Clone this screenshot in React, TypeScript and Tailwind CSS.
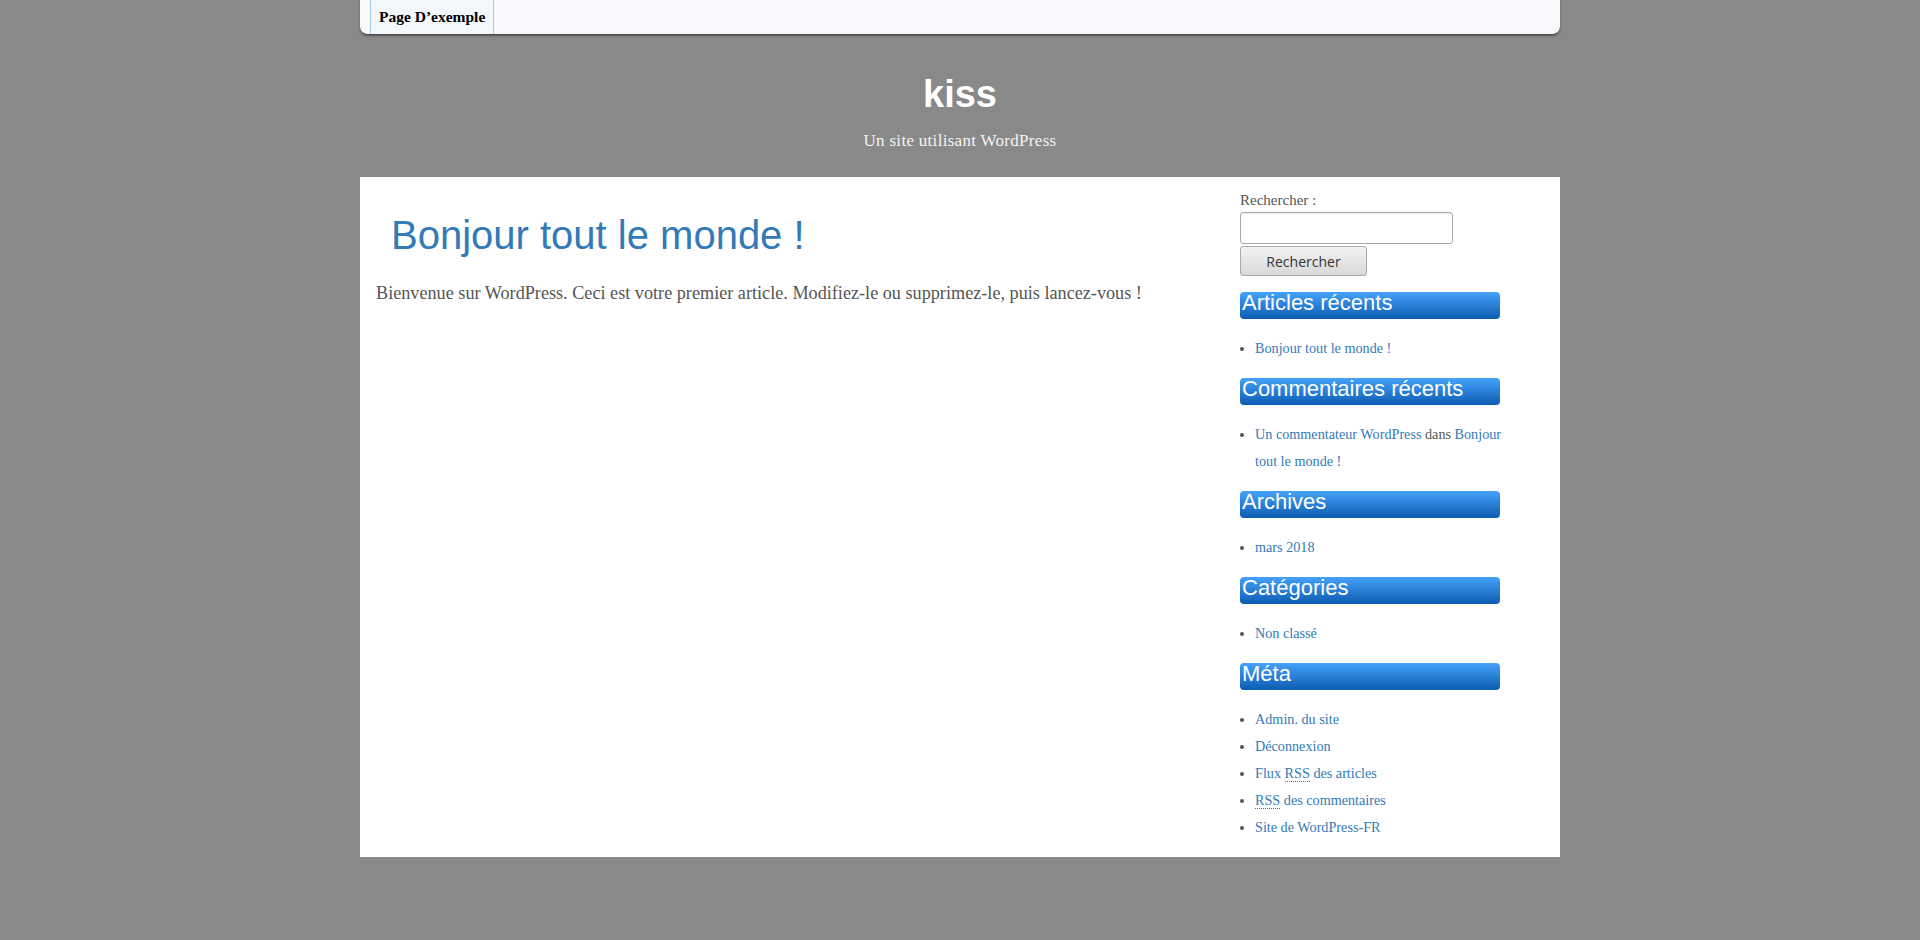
import React from "react";

const serif = "font-['Liberation_Serif','Times_New_Roman',serif]";
const sans = "font-['Liberation_Sans',Arial,sans-serif]";

const WidgetTitle: React.FC<{ children: React.ReactNode }> = ({ children }) => (
  <h2
    className={`${sans} h-[27px] rounded-[4px] bg-gradient-to-b from-[#45a2fa] to-[#0a5db3] pl-[2px] text-[22px] leading-[22px] text-white`}
  >
    {children}
  </h2>
);

const Link: React.FC<{ children: React.ReactNode }> = ({ children }) => (
  <a href="#" className="text-[#337ab7]">
    {children}
  </a>
);

const Rss = () => (
  <abbr className="no-underline border-b border-dotted border-[#337ab7]" title="Really Simple Syndication">
    RSS
  </abbr>
);

const WidgetList: React.FC<{ children: React.ReactNode }> = ({ children }) => (
  <ul className={`${serif} my-4 -mr-[8px] list-disc pl-[15px] text-[14.2px] leading-[27px] text-[#555] marker:text-[#555]`}>
    {children}
  </ul>
);

export default function App() {
  return (
    <div className="min-h-screen bg-[#898989]">
      <div className="mx-auto w-[1200px]">
        {/* menu */}
        <nav className="flex h-[35px] rounded-b-[8px] border-b border-[#4a4a4a] bg-[#f8f9fd] pl-[10px] shadow-[0_1px_2px_rgba(0,0,0,0.35)]">
          <a
            href="#"
            className={`${serif} h-full border-x border-[#a9c7e0] bg-[#f4f7fc] px-[8px] text-[15.5px] font-bold leading-[34px] text-black`}
          >
            Page D’exemple
          </a>
        </nav>

        {/* site title */}
        <header className="pt-[37px] pb-[24px] text-center">
          <h1 className={`${sans} text-[38px] font-bold leading-[44px] text-white`}>kiss</h1>
          <p className={`${serif} mt-[13px] text-[17px] leading-[24px] tracking-[0.3px] text-[#f4f4f4]`}>
            Un site utilisant WordPress
          </p>
        </header>

        {/* content */}
        <div className="flex bg-white">
          <main className="flex-1 pl-[16px] pt-[34px]">
            <h2 className={`${sans} ml-[15px] text-[40px] leading-[48px] text-[#337ab7]`}>
              Bonjour tout le monde !
            </h2>
            <p className={`${serif} mt-[20px] text-[18.2px] leading-[28px] text-[#555]`}>
              Bienvenue sur WordPress. Ceci est votre premier article. Modifiez-le ou supprimez-le, puis lancez-vous !
            </p>
          </main>

          <aside className="mr-[60px] w-[260px] pt-[13px]">
            <form className="mb-[16px]">
              <label className={`${serif} mb-[2px] block text-[15px] leading-[20px] text-[#555]`}>
                Rechercher :
              </label>
              <input
                type="text"
                className="block h-[32px] w-[213px] rounded-[3px] border border-[#aaa] bg-white shadow-[inset_0_1px_1px_rgba(0,0,0,0.08)]"
              />
              <button
                type="button"
                className="mt-[2px] block h-[30px] w-[127px] rounded-[3px] border border-[#aaa] bg-gradient-to-b from-[#f2f2f2] to-[#d9d9d9] font-['Open_Sans','Noto_Sans',sans-serif] text-[14px] text-[#333]"
              >
                Rechercher
              </button>
            </form>

            <WidgetTitle>Articles récents</WidgetTitle>
            <WidgetList>
              <li>
                <Link>Bonjour tout le monde !</Link>
              </li>
            </WidgetList>

            <WidgetTitle>Commentaires récents</WidgetTitle>
            <WidgetList>
              <li>
                <Link>Un commentateur WordPress</Link> dans <Link>Bonjour tout le monde !</Link>
              </li>
            </WidgetList>

            <WidgetTitle>Archives</WidgetTitle>
            <WidgetList>
              <li>
                <Link>mars 2018</Link>
              </li>
            </WidgetList>

            <WidgetTitle>Catégories</WidgetTitle>
            <WidgetList>
              <li>
                <Link>Non classé</Link>
              </li>
            </WidgetList>

            <WidgetTitle>Méta</WidgetTitle>
            <WidgetList>
              <li>
                <Link>Admin. du site</Link>
              </li>
              <li>
                <Link>Déconnexion</Link>
              </li>
              <li>
                <Link>
                  Flux <Rss /> des articles
                </Link>
              </li>
              <li>
                <Link>
                  <Rss /> des commentaires
                </Link>
              </li>
              <li>
                <Link>Site de WordPress-FR</Link>
              </li>
            </WidgetList>
          </aside>
        </div>
      </div>
    </div>
  );
}
